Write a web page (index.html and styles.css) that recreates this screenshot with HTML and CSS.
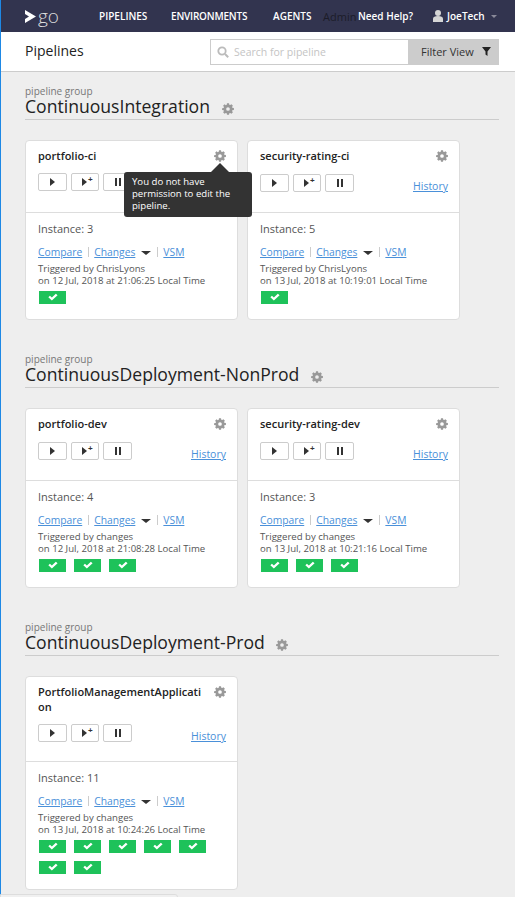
FILE: index.html
```html
<!DOCTYPE html>
<html lang="en">
<head>
    <meta charset="UTF-8">
    <title>Pipelines</title>
    <link rel="stylesheet" href="styles.css">
</head>
<body>

<svg class="defs">
    <defs>
        <symbol id="gear" viewBox="-1 -1 26 26">
            <path d="M9.800 -.5h4.400l.6 3.300 1.900.8 2.800-1.900 3.100 3.100-1.900 2.800.8 1.900 3.300.6v3.800l-3.300.6-.8 1.900 1.900 2.800-3.100 3.100-2.800-1.900-1.900.8-.6 3.300H9.800l-.6-3.300-1.900-.8-2.800 1.900-3.100-3.100 1.900-2.800-.8-1.900L-.8 14v-3.800l3.300-.6.8-1.900L1.400 4.900l3.100-3.100 2.800 1.900 1.900-.8zM12 8a4 4 0 1 0 0 8 4 4 0 0 0 0-8z" fill-rule="evenodd"/>
        </symbol>
        <symbol id="check" viewBox="0 0 14 10">
            <path d="M.5 5.200l2.200-2.100 2.700 2.500L11 .3l2.400 2.200L5.400 10z"/>
        </symbol>
    </defs>
</svg>

<header class="topbar">
    <svg class="logo-mark" width="11" height="13" viewBox="0 0 11 13"><path d="M0 0l11 6.500L0 13V9l4-2.500L0 4z" fill="#fff"/></svg>
    <span class="logo-text">go</span>
    <nav class="main-nav">
        <a class="nav-pipelines">PIPELINES</a>
        <a class="nav-env">ENVIRONMENTS</a>
        <a class="nav-agents">AGENTS</a>
        <a class="nav-admin">Admin</a>
        <a class="nav-help">Need Help?</a>
    </nav>
    <div class="user-menu">
        <svg width="10" height="12" viewBox="0 0 10 12"><circle cx="5" cy="3" r="3" fill="#d6d6d6"/><path d="M0 12V8.500C0 7 2 6 5 6s5 1 5 2.500V12z" fill="#d6d6d6"/></svg>
        <span>JoeTech</span>
        <i class="user-caret"></i>
    </div>
</header>

<div class="subbar">
    <h1>Pipelines</h1>
    <div class="search">
        <div class="search-box">
            <svg width="12" height="12" viewBox="0 0 12 12"><circle cx="5" cy="5" r="3.700" fill="none" stroke="#bbb" stroke-width="1.800"/><path d="M8 8l3.200 3.200" stroke="#bbb" stroke-width="2"/></svg>
            <span>Search for pipeline</span>
        </div>
        <div class="filter-btn">
            <span>Filter View</span>
            <svg width="9" height="9" viewBox="0 0 9 9"><path d="M0 0h9L5.500 4.500V9L3.500 7.500v-3z" fill="#222"/></svg>
        </div>
    </div>
</div>

<main class="content">

    <section class="group">
        <div class="group-label">pipeline group</div>
        <h2 class="group-title">ContinuousIntegration <svg class="group-gear"><use href="#gear"/></svg></h2>
        <div class="cards">
            <article class="card">
                <div class="card-top">
                    <h3>portfolio-ci</h3>
                    <svg class="card-gear"><use href="#gear"/></svg>
                    <div class="actions">
                        <button class="btn"><i class="play"></i></button>
                        <button class="btn btn-plus"><i class="play"></i><b>+</b></button>
                        <button class="btn"><i class="pause"></i></button>
                    </div>
                </div>
                <div class="card-bottom">
                    <div class="instance">Instance: 3</div>
                    <div class="links"><a>Compare</a><span class="sep"></span><a>Changes</a><i class="drop"></i><span class="sep"></span><a>VSM</a></div>
                    <div class="trigger">Triggered by ChrisLyons<br>on 12 Jul, 2018 at 21:06:25 Local Time</div>
                    <div class="stages"><span class="stage"><svg><use href="#check"/></svg></span></div>
                </div>
                <div class="tooltip">You do not have permission to edit the pipeline.</div>
            </article>
            <article class="card">
                <div class="card-top">
                    <h3>security-rating-ci</h3>
                    <svg class="card-gear"><use href="#gear"/></svg>
                    <div class="actions">
                        <button class="btn"><i class="play"></i></button>
                        <button class="btn btn-plus"><i class="play"></i><b>+</b></button>
                        <button class="btn"><i class="pause"></i></button>
                        <a class="history">History</a>
                    </div>
                </div>
                <div class="card-bottom">
                    <div class="instance">Instance: 5</div>
                    <div class="links"><a>Compare</a><span class="sep"></span><a>Changes</a><i class="drop"></i><span class="sep"></span><a>VSM</a></div>
                    <div class="trigger">Triggered by ChrisLyons<br>on 13 Jul, 2018 at 10:19:01 Local Time</div>
                    <div class="stages"><span class="stage"><svg><use href="#check"/></svg></span></div>
                </div>
            </article>
        </div>
    </section>

    <section class="group">
        <div class="group-label">pipeline group</div>
        <h2 class="group-title">ContinuousDeployment-NonProd <svg class="group-gear"><use href="#gear"/></svg></h2>
        <div class="cards">
            <article class="card">
                <div class="card-top">
                    <h3>portfolio-dev</h3>
                    <svg class="card-gear"><use href="#gear"/></svg>
                    <div class="actions">
                        <button class="btn"><i class="play"></i></button>
                        <button class="btn btn-plus"><i class="play"></i><b>+</b></button>
                        <button class="btn"><i class="pause"></i></button>
                        <a class="history">History</a>
                    </div>
                </div>
                <div class="card-bottom">
                    <div class="instance">Instance: 4</div>
                    <div class="links"><a>Compare</a><span class="sep"></span><a>Changes</a><i class="drop"></i><span class="sep"></span><a>VSM</a></div>
                    <div class="trigger">Triggered by changes<br>on 12 Jul, 2018 at 21:08:28 Local Time</div>
                    <div class="stages">
                        <span class="stage"><svg><use href="#check"/></svg></span>
                        <span class="stage"><svg><use href="#check"/></svg></span>
                        <span class="stage"><svg><use href="#check"/></svg></span>
                    </div>
                </div>
            </article>
            <article class="card">
                <div class="card-top">
                    <h3>security-rating-dev</h3>
                    <svg class="card-gear"><use href="#gear"/></svg>
                    <div class="actions">
                        <button class="btn"><i class="play"></i></button>
                        <button class="btn btn-plus"><i class="play"></i><b>+</b></button>
                        <button class="btn"><i class="pause"></i></button>
                        <a class="history">History</a>
                    </div>
                </div>
                <div class="card-bottom">
                    <div class="instance">Instance: 3</div>
                    <div class="links"><a>Compare</a><span class="sep"></span><a>Changes</a><i class="drop"></i><span class="sep"></span><a>VSM</a></div>
                    <div class="trigger">Triggered by changes<br>on 13 Jul, 2018 at 10:21:16 Local Time</div>
                    <div class="stages">
                        <span class="stage"><svg><use href="#check"/></svg></span>
                        <span class="stage"><svg><use href="#check"/></svg></span>
                        <span class="stage"><svg><use href="#check"/></svg></span>
                    </div>
                </div>
            </article>
        </div>
    </section>

    <section class="group">
        <div class="group-label">pipeline group</div>
        <h2 class="group-title">ContinuousDeployment-Prod <svg class="group-gear"><use href="#gear"/></svg></h2>
        <div class="cards">
            <article class="card">
                <div class="card-top card-top-tall">
                    <h3>PortfolioManagementApplication</h3>
                    <svg class="card-gear"><use href="#gear"/></svg>
                    <div class="actions">
                        <button class="btn"><i class="play"></i></button>
                        <button class="btn btn-plus"><i class="play"></i><b>+</b></button>
                        <button class="btn"><i class="pause"></i></button>
                        <a class="history">History</a>
                    </div>
                </div>
                <div class="card-bottom">
                    <div class="instance">Instance: 11</div>
                    <div class="links"><a>Compare</a><span class="sep"></span><a>Changes</a><i class="drop"></i><span class="sep"></span><a>VSM</a></div>
                    <div class="trigger">Triggered by changes<br>on 13 Jul, 2018 at 10:24:26 Local Time</div>
                    <div class="stages">
                        <span class="stage"><svg><use href="#check"/></svg></span>
                        <span class="stage"><svg><use href="#check"/></svg></span>
                        <span class="stage"><svg><use href="#check"/></svg></span>
                        <span class="stage"><svg><use href="#check"/></svg></span>
                        <span class="stage"><svg><use href="#check"/></svg></span>
                        <span class="stage"><svg><use href="#check"/></svg></span>
                        <span class="stage"><svg><use href="#check"/></svg></span>
                    </div>
                </div>
            </article>
        </div>
    </section>

</main>

<div class="bottom-strip"></div>

</body>
</html>
```

FILE: styles.css
```css
* {
    box-sizing: border-box;
}
html, body {
    height: 897px;
    overflow: hidden;
}
body {
    margin: 0;
    font-family: "Open Sans", sans-serif;
    font-size: 10px;
    color: #333;
    background-color: #eee;
    border-left: 1px solid #1e88e5;
}
.defs {
    display: none;
}
a {
    cursor: pointer;
}

/* top bar */
.topbar {
    display: flex;
    align-items: center;
    height: 32px;
    padding-left: 24px;
    background-color: #32344f;
    color: #fff;
}
.logo-mark {
    flex: none;
}
.logo-text {
    margin-left: 2px;
    font-size: 19px;
    font-weight: 300;
    line-height: 26px;
    color: #ddd;
}
.main-nav {
    display: flex;
    margin-left: 40px;
    font-size: 10px;
    font-weight: 600;
}
.nav-pipelines {
    width: 72px;
}
.nav-env {
    width: 102px;
    letter-spacing: -.2px;
}
.nav-agents {
    width: 50px;
}
.nav-admin {
    width: 35px;
    font-size: 11px;
    font-weight: 400;
    color: #1c1c28;
}
.nav-help {
    width: 75px;
}
.user-menu {
    display: flex;
    align-items: center;
    gap: 4px;
    font-size: 10px;
    font-weight: 600;
}
.user-caret {
    margin-left: 2px;
    border: 3px solid transparent;
    border-top: 3px solid #8a8a9a;
    border-bottom: 0;
}

/* sub bar */
.subbar {
    display: flex;
    justify-content: space-between;
    align-items: center;
    height: 40px;
    padding: 0 16px 0 24px;
    background-color: #fff;
    border-bottom: 1px solid #ccc;
}
.subbar h1 {
    margin: -2px 0 0;
    font-size: 14px;
    font-weight: 400;
    color: #222;
}
.search {
    display: flex;
    height: 26px;
}
.search-box {
    display: flex;
    align-items: center;
    gap: 5px;
    width: 199px;
    padding-left: 6px;
    background-color: #fff;
    border: 1px solid #ccc;
    color: #c4c4c4;
    font-size: 10.5px;
}
.filter-btn {
    display: flex;
    align-items: center;
    gap: 8px;
    width: 90px;
    padding-left: 12px;
    background-color: #ccc;
    color: #333;
    font-size: 11px;
}

/* groups */
.content {
    padding: 13px 16px 0 24px;
}
.group {
    margin-bottom: 33px;
}
.group-label {
    font-size: 10px;
    line-height: 12px;
    color: #777;
}
.group-title {
    height: 23px;
    margin: 0;
    font-size: 17.6px;
    font-weight: 400;
    line-height: 18px;
    color: #222;
    border-bottom: 1px solid #ccc;
}
.group-gear {
    width: 12px;
    height: 12px;
    margin-left: 7px;
    fill: #999;
    vertical-align: -2px;
}
.cards {
    display: flex;
    flex-wrap: wrap;
    gap: 9px;
    margin-top: 20px;
}

/* pipeline cards */
.card {
    position: relative;
    width: 213px;
    background-color: #fff;
    border: 1px solid #ddd;
    border-radius: 4px;
}
.card-top {
    position: relative;
    height: 71px;
    padding: 7px 12px 0;
}
.card-top-tall {
    height: 84px;
}
.card h3 {
    width: 168px;
    margin: 0;
    font-size: 11px;
    font-weight: 600;
    line-height: 15px;
    color: #222;
    word-break: break-all;
}
.card-gear {
    position: absolute;
    top: 9px;
    right: 11px;
    width: 12px;
    height: 12px;
    fill: #999;
}
.actions {
    display: flex;
    align-items: center;
    gap: 4px;
    margin-top: 10px;
}
.card-top-tall .actions {
    margin-top: 9px;
}
.btn {
    display: flex;
    justify-content: center;
    align-items: center;
    width: 29px;
    height: 18px;
    padding: 0;
    background-color: #fff;
    border: 1px solid #ccc;
    border-radius: 2px;
}
.btn-plus {
    justify-content: flex-start;
    width: 28px;
    padding-left: 10px;
}
.btn-plus b {
    height: 12px;
    margin-left: 1px;
    font-size: 8px;
    line-height: 8px;
    color: #333;
}
.play {
    border-left: 5px solid #333;
    border-top: 4px solid transparent;
    border-bottom: 4px solid transparent;
}
.pause {
    width: 6px;
    height: 8px;
    border-left: 2px solid #333;
    border-right: 2px solid #333;
}
.history {
    margin: 6px -1px 0 auto;
    font-size: 10.5px;
    color: #4a90d9;
    text-decoration: underline;
}
.card-bottom {
    padding: 9px 12px 0;
    border-top: 1px solid #ddd;
}
.instance {
    font-size: 11px;
    line-height: 14px;
    color: #555;
}
.links {
    display: flex;
    align-items: center;
    margin-top: 9px;
    font-size: 10.3px;
    line-height: 14px;
    color: #4a90d9;
}
.links a {
    text-decoration: underline;
}
.sep {
    width: 1px;
    height: 10px;
    margin: 0 5px 0 6px;
    background-color: #ccc;
}
.drop {
    margin-left: 6px;
    margin-top: 2px;
    border: 5px solid transparent;
    border-top: 4px solid #333;
    border-bottom: 0;
}
.trigger {
    margin-top: 4px;
    font-size: 9.6px;
    line-height: 12px;
    color: #555;
    white-space: nowrap;
}
.stages {
    display: flex;
    flex-wrap: wrap;
    gap: 8px;
    margin: 4px 0 15px 1px;
}
.stage {
    display: flex;
    justify-content: center;
    align-items: center;
    width: 27px;
    height: 13px;
    background-color: #1ec25a;
}
.stage svg {
    width: 10px;
    height: 8px;
    margin-top: -2px;
    fill: #fff;
}

/* tooltip over the first card */
.tooltip {
    position: absolute;
    z-index: 1;
    top: 31px;
    left: 98px;
    width: 128px;
    padding: 4px 8px 5px;
    background-color: #333;
    border-radius: 3px;
    color: #fff;
    font-size: 9.6px;
    line-height: 12px;
}
.tooltip::before {
    content: "";
    position: absolute;
    top: -9px;
    left: 87px;
    border: 9px solid transparent;
    border-top: 0;
    border-bottom: 9px solid #333;
}

/* cut off panel at the bottom edge */
.bottom-strip {
    position: fixed;
    left: 0;
    bottom: -3px;
    width: 178px;
    height: 6px;
    background-color: #f0f0f0;
    border: 1px solid #ddd;
    border-radius: 0 3px 0 0;
}
```
